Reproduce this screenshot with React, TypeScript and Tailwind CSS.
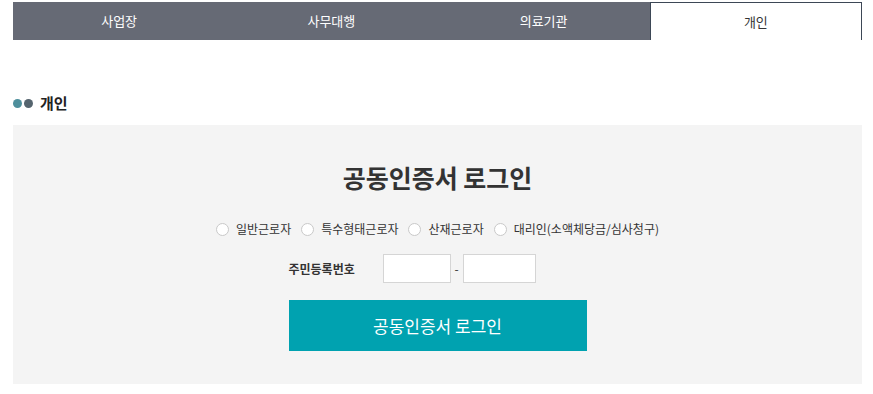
import { useState } from 'react';

const tabs = ['사업장', '사무대행', '의료기관', '개인'];
const types = ['일반근로자', '특수형태근로자', '산재근로자', '대리인(소액체당금/심사청구)'];

const App = () => {
  const [active] = useState(3);
  const [picked, setPicked] = useState<number | null>(null);

  return (
    <div
      className="w-[873px] h-[394px] bg-white text-[#333]"
      style={{ fontFamily: '"Noto Sans CJK KR", "Noto Sans", sans-serif' }}
    >
      <div className="pt-[2px] px-[13px] pr-[11px]">
        {/* Tabs */}
        <div className="grid grid-cols-4 h-[38px]">
          {tabs.map((t, i) => (
            <div
              key={t}
              className={
                i === active
                  ? 'flex items-center justify-center bg-white text-[13px] text-[#333] border border-b-0 border-[#3d4756]'
                  : 'flex items-center justify-center bg-[#666a75] text-[13px] text-white'
              }
            >
              {t}
            </div>
          ))}
        </div>

        {/* Section title */}
        <div className="flex items-center gap-[7px] mt-[52px] h-[22px]">
          <div className="flex gap-[2px]">
            <span className="w-[9px] h-[9px] rounded-full bg-[#4e8f9c]" />
            <span className="w-[9px] h-[9px] rounded-full bg-[#55646e]" />
          </div>
          <span className="text-[15px] font-bold text-[#222]">개인</span>
        </div>

        {/* Login box */}
        <div className="mt-[11px] h-[259px] bg-[#f4f4f4] flex flex-col items-center">
          <h2 className="mt-[34px] text-[25px] font-bold leading-[36px] text-[#333]">공동인증서 로그인</h2>

          <div className="flex items-center gap-[10px] mt-[25px] text-[12px] text-[#333]">
            {types.map((t, i) => (
              <label key={t} className="flex items-center gap-[7px] cursor-pointer" onClick={() => setPicked(i)}>
                <span className="w-[13px] h-[13px] rounded-full border border-[#c9c9c9] bg-white flex items-center justify-center">
                  {picked === i && <span className="w-[7px] h-[7px] rounded-full bg-[#00a2b0]" />}
                </span>
                <span>{t}</span>
              </label>
            ))}
          </div>

          <div className="flex items-center mt-[16px] w-[298px]">
            <span className="text-[12px] font-bold text-[#333] w-[94px]">주민등록번호</span>
            <input className="w-[68px] h-[29px] bg-white border border-[#d5d5d5] outline-none" />
            <span className="text-[12px] mx-[4px]">-</span>
            <input type="password" className="w-[73px] h-[29px] bg-white border border-[#d5d5d5] outline-none" />
          </div>

          <button className="mt-[17px] w-[298px] h-[51px] bg-[#00a2b0] text-white text-[17px]">
            공동인증서 로그인
          </button>
        </div>
      </div>
    </div>
  );
};

export default App;
